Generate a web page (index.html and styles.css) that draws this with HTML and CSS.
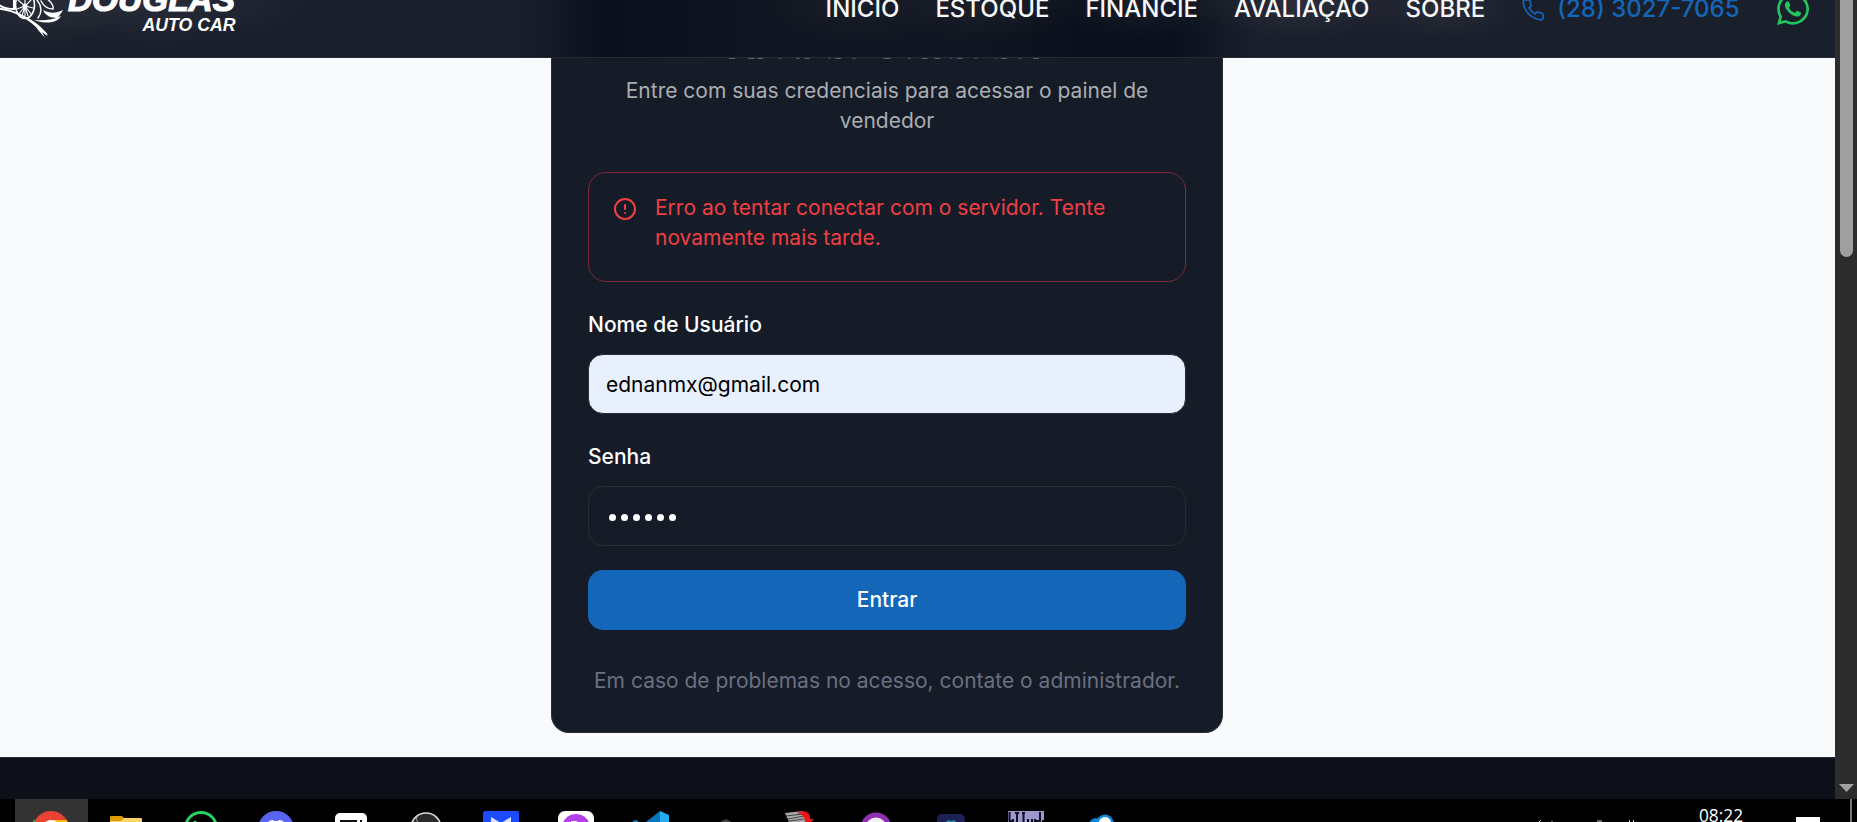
FILE: index.html
```html
<!DOCTYPE html>
<html lang="pt-BR">
<head>
<meta charset="utf-8">
<title>Douglas Auto Car</title>
<link rel="stylesheet" href="styles.css">
</head>
<body>
<div class="screen">
  <div class="viewport">
    <header class="site-header">
      <svg class="logo" width="240" height="57" viewBox="0 0 240 57">
        <g fill="none" stroke="#fff" stroke-linecap="round">
          <path d="M-2 8.500C16 10 30 19 42 31" stroke-width="2"/>
          <path d="M0 5.500C4 8 9 9 14 9V0" stroke-width="2"/>
          <ellipse cx="25" cy="5" rx="9.500" ry="13.500" stroke-width="1.600"/>
          <path d="M25 6V-6M25 6V16M25 6L19 14M25 6L31 14M25 6L17 9M25 6L33 8M25 6L18 0M25 6L32 -1M25 6L22 16M25 6L28 16" stroke-width="1.100"/>
          <path d="M37 0C42 6 42 13 38 18" stroke-width="1.400"/>
          <path d="M41 1C44 7 49 9 53 9C54 5 50 1 46 -2" stroke-width="1.400"/>
        </g>
        <g fill="#fff">
          <path d="M43 10C50 14 57 13 63 10C61 15 55 18 61 18C55 18 50 18 47 15C45 14 44 12 43 10Z"/>
          <path d="M34 20C44 21 53 20 61 16C58 22 48 25 34 20Z"/>
          <path d="M22 15C34 20 43 28 48 35L46 34.500L48.500 37L42 32L45 38L39 31C34 24 29 19 22 15Z"/>
          <circle cx="25" cy="6" r="2.500"/>
        </g>
        <text class="brand brand-name" x="68" y="11" textLength="167" lengthAdjust="spacingAndGlyphs">DOUGLAS</text>
        <text class="brand brand-sub" x="142.500" y="31" textLength="93" lengthAdjust="spacingAndGlyphs">AUTO CAR</text>
      </svg>
      <nav class="nav">
        <a>INÍCIO</a><a>ESTOQUE</a><a>FINANCIE</a><a>AVALIAÇÃO</a><a>SOBRE</a>
        <a class="phone">
          <svg width="24" height="24" viewBox="0 0 24 24" fill="none" stroke="currentColor" stroke-width="1.700" stroke-linecap="round" stroke-linejoin="round"><path d="M22 16.920v3a2 2 0 0 1-2.180 2 19.790 19.790 0 0 1-8.630-3.070 19.500 19.500 0 0 1-6-6 19.790 19.790 0 0 1-3.070-8.670A2 2 0 0 1 4.110 2h3a2 2 0 0 1 2 1.720 12.840 12.840 0 0 0 .7 2.810 2 2 0 0 1-.45 2.110L8.090 9.910a16 16 0 0 0 6 6l1.270-1.270a2 2 0 0 1 2.110-.45 12.840 12.840 0 0 0 2.810.7A2 2 0 0 1 22 16.920z"/></svg>
          <span>(28) 3027-7065</span>
        </a>
        <a class="whats">
          <svg width="32" height="32" viewBox="0 0 448 448" fill="currentColor"><path transform="translate(0 -32)" d="M380.900 97.100C339 55.100 283.200 32 223.900 32c-122.400 0-222 99.600-222 222 0 39.100 10.200 77.300 29.600 111L0 480l117.700-30.900c32.400 17.700 68.900 27 106.100 27h.1c122.300 0 224.100-99.600 224.100-222 0-59.300-25.200-115-67.100-157zm-157 341.600c-33.200 0-65.700-8.900-94-25.700l-6.700-4-69.800 18.300L72 359.200l-4.400-7c-18.500-29.400-28.200-63.300-28.200-98.200 0-101.700 82.800-184.500 184.600-184.500 49.300 0 95.600 19.200 130.400 54.100 34.800 34.900 56.200 81.200 56.100 130.500 0 101.800-84.900 184.600-186.600 184.600zm101.200-138.200c-5.500-2.800-32.800-16.200-37.900-18-5.100-1.900-8.800-2.800-12.500 2.800-3.700 5.600-14.300 18-17.600 21.800-3.200 3.700-6.500 4.200-12 1.400-32.600-16.300-54-29.100-75.500-66-5.700-9.800 5.700-9.100 16.300-30.300 1.800-3.700.9-6.900-.5-9.700-1.400-2.800-12.500-30.100-17.100-41.200-4.500-10.800-9.100-9.300-12.500-9.500-3.200-.2-6.900-.2-10.600-.2-3.700 0-9.700 1.400-14.800 6.900-5.100 5.600-19.400 19-19.400 46.300 0 27.300 19.900 53.700 22.600 57.400 2.800 3.700 39.100 59.700 94.800 83.800 35.200 15.200 49 16.500 66.600 13.900 10.700-1.600 32.800-13.400 37.400-26.400 4.600-13 4.600-24.100 3.200-26.400-1.300-2.500-5-3.900-10.500-6.600z"/></svg>
        </a>
      </nav>
    </header>

    <main class="main">
      <section class="card">
        <h1 class="title">Área do Vendedor</h1>
        <p class="subtitle">Entre com suas credenciais para acessar o painel de vendedor</p>
        <div class="alert">
          <svg width="24" height="24" viewBox="0 0 24 24" fill="none" stroke="currentColor" stroke-width="2" stroke-linecap="round"><circle cx="12" cy="12" r="10"/><path d="M12 8v4M12 16h.010"/></svg>
          <p>Erro ao tentar conectar com o servidor. Tente novamente mais tarde.</p>
        </div>
        <label class="label">Nome de Usuário</label>
        <div class="input filled">ednanmx@gmail.com</div>
        <label class="label">Senha</label>
        <div class="input password"><i></i><i></i><i></i><i></i><i></i><i></i></div>
        <button class="submit">Entrar</button>
        <p class="help">Em caso de problemas no acesso, contate o administrador.</p>
      </section>
    </main>
    <footer class="site-footer"></footer>
  </div>

  <div class="scrollbar">
    <div class="thumb"></div>
    <svg width="15" height="8" viewBox="0 0 15 8"><path d="M0 0H15L7.500 8Z" fill="#9f9f9f"/></svg>
  </div>

  <div class="taskbar">
    <svg width="1857" height="23" viewBox="0 0 1857 23">
      <rect x="15" width="73" height="23" fill="#333"/>
      <circle cx="51" cy="30" r="18" fill="#ea4335"/>
      <path d="M34 20L36 23H33Z" fill="#34a853"/>
      <path d="M51 21H67L69 30H51Z" fill="#fbbc04"/>
      <circle cx="51" cy="30" r="9" fill="#fff"/>

      <path d="M110 18a1 1 0 0 1 1-1H122L125 20V23H110Z" fill="#e09c00"/>
      <path d="M110 22L121 22L124 19H141a1 1 0 0 1 1 1V23H110Z" fill="#ffd566"/>

      <circle cx="201" cy="29" r="15.500" fill="none" stroke="#25d366" stroke-width="3"/>
      <path d="M193 23Q195 20 197 23Z" fill="#25d366"/>

      <circle cx="276" cy="30" r="18" fill="#5865f2"/>
      <path d="M268 23Q270 21 273 21L274 22H278L279 21Q282 21 284 23Z" fill="#fff"/>

      <rect x="335" y="14" width="32" height="20" rx="5" fill="#fff"/>
      <path d="M341 23V22H357M360 22H362" fill="none" stroke="#111" stroke-width="2"/>

      <circle cx="426" cy="29" r="15" fill="#29282b" stroke="#ddd" stroke-width="1.600"/>
      <path d="M418 17Q414 20 420 25" fill="none" stroke="#aaa" stroke-width="1"/>

      <rect x="483" y="12" width="36" height="20" rx="2" fill="#1d4cff"/>
      <path d="M491 18L501 24L511 18V23H491Z" fill="#dbe3ff"/>

      <rect x="558" y="12" width="36" height="20" rx="7" fill="#fff"/>
      <circle cx="576" cy="29" r="14" fill="#b43fe8"/>
      <path d="M571 22H576L578 23H571Z" fill="#fff"/>

      <path d="M633 22L636 21L639 23H633Z" fill="#1684c7"/>
      <path d="M646 23L660 12V23Z" fill="#0878bd"/>
      <path d="M660 12L669 16V23H660Z" fill="#28aaf0"/>

      <path d="M720 23L726 20L732 23Z" fill="#47423f"/>

      <path d="M785 14L803 12L806 23H789Z" fill="#aaa"/>
      <path d="M786 17L803 15M788 20L804 17M789 22L804 20" stroke="#444" stroke-width="1"/>
      <path d="M797 14C803 10 811 13 810 20L814 20L811 23H805C805 19 803 15 797 14Z" fill="#ee151b"/>

      <circle cx="876" cy="29" r="13" fill="#f1eef8" stroke="#9030b0" stroke-width="5"/>

      <rect x="937" y="15" width="28" height="20" rx="5" fill="#1c2354"/>
      <path d="M946 23Q948 20 951 22Q955 20 956 23" fill="#278cab"/>

      <rect x="1008" y="12" width="36" height="11" fill="#9d97cf"/>
      <path d="M1009.500 13V23M1013 20V23M1017 14V23M1015 14H1019M1023.500 14V23M1022 14H1025M1028 20V23M1032 20V23M1035 20V23M1040 13V23M1043 21V23M1009 22H1013M1036 22H1041" fill="none" stroke="#11101b" stroke-width="2"/>

      <circle cx="1096" cy="26" r="7" fill="#0c83d2"/>
      <circle cx="1105" cy="24" r="7.300" fill="#fff" stroke="#0c8de0" stroke-width="2.500"/>

      <path d="M1541 21L1539 23M1552 22V23M1597 22H1602M1629.500 21V23M1633.500 21V23" stroke="#ccc" stroke-width="1"/>
      <text class="clock" x="1699" y="22.500" textLength="44" lengthAdjust="spacingAndGlyphs">08:22</text>
      <rect x="1796" y="18" width="24" height="5" fill="#fff"/>
      <rect x="1850" width="2" height="23" fill="#777"/>
    </svg>
  </div>
</div>
</body>
</html>
```
FILE: styles.css
```css
* { box-sizing: border-box; margin: 0; padding: 0; }
html, body { width: 1857px; height: 822px; overflow: hidden; background: #000; }
body { font-family: Inter, "Liberation Sans", sans-serif; font-size: 21px; line-height: 30px; }
.screen { display: grid; grid-template-columns: 1835px 22px; grid-template-rows: 799px 23px; }
.viewport { position: relative; display: flex; flex-direction: column; background: #f9fafc; overflow: hidden; }

.site-header {
  position: absolute; top: 0; left: 0; z-index: 2;
  width: 100%; height: 58px; overflow: hidden;
  display: flex; justify-content: space-between; align-items: flex-start;
  padding-right: 26px;
  border-bottom: 1px solid #252a35;
  background:
    radial-gradient(ellipse 90px 50px at 30px 0, rgba(50, 55, 65, .55), transparent),
    radial-gradient(ellipse 150px 45px at 160px 0, rgba(50, 55, 65, .55), transparent),
    radial-gradient(ellipse 110px 36px at 1300px 4px, rgba(52, 54, 62, .6), transparent),
    radial-gradient(ellipse 80px 34px at 1444px 8px, rgba(52, 54, 62, .5), transparent),
    radial-gradient(ellipse 90px 34px at 860px 4px, rgba(38, 42, 52, .4), transparent),
    radial-gradient(ellipse 90px 34px at 992px 4px, rgba(38, 42, 52, .5), transparent),
    radial-gradient(ellipse 90px 34px at 1142px 4px, rgba(38, 42, 52, .5), transparent),
    linear-gradient(90deg, #1a1f2c 0, #1a1f2c 510px, #131925 555px, #0a101c 600px, #0b111d 660px, #111622 780px, #111622 960px, #0a101c 1080px, #0a101c 1175px, #131925 1220px, #1a1f2c 1260px, #1a1f2c 100%);
}
.logo { display: block; flex: none; }
.brand { fill: #fff; font-family: "Liberation Sans", Arial, sans-serif; font-weight: 700; font-style: italic; }
.brand-name { font-size: 34px; stroke: #fff; stroke-width: 1.200px; }
.brand-sub { font-size: 18.500px; }
.nav { display: flex; align-items: center; gap: 36px; height: 36px; margin-top: -9px; color: #f7f8fa; font-size: 24px; font-weight: 500; line-height: 36px; white-space: nowrap; }
.nav a { display: flex; align-items: center; }
.nav .phone { gap: 12px; color: #1466b8; }
.phone svg { margin-top: 2px; }
.nav .whats { margin-left: 1.500px; color: #22c55e; }

.main { flex: none; height: 757px; display: flex; justify-content: center; align-items: flex-start; padding-right: 61px; }
.card { width: 672px; height: 733px; padding: 21px 36px 0; background: #161b28; border: 1px solid #282d38; border-top: 0; border-radius: 0 0 18px 18px; display: flex; flex-direction: column; }
.title { height: 48px; color: #fff; font-size: 36px; line-height: 48px; font-weight: 700; text-align: center; -webkit-text-stroke: .3px #fff; }
.subtitle { margin-top: 7px; color: #abadb1; text-align: center; }
.alert { display: flex; gap: 18px; height: 110px; margin-top: 36px; padding: 20px 24px; color: #ef3f43; border: 1px solid #7d2b36; border-radius: 18px; }
.alert svg { flex: none; margin-top: 4px; }
.label { margin-top: 28px; color: #fff; font-weight: 500; }
.input { display: flex; align-items: center; height: 60px; margin-top: 14px; padding: 2px 17px 0; border: 1px solid #292d35; border-radius: 15px; color: #fff; }
.filled { background: #e8effd; color: #000; }
.password { gap: 5px; padding-left: 20px; padding-top: 3px; }
.password i { width: 7px; height: 7px; border-radius: 50%; background: #fff; }
.submit { height: 60px; margin-top: 24px; border: 0; border-radius: 15px; background: #1466b8; color: #fff; font: 500 21px/30px Inter, sans-serif; }
.help { margin-top: 36px; color: #6a7080; text-align: center; white-space: nowrap; }
.site-footer { flex: 1; background: #0d1018; border-top: 1px solid #272b33; }

.scrollbar { display: flex; flex-direction: column; justify-content: space-between; align-items: center; background: #2c2c2c; padding-bottom: 7px; }
.thumb { width: 13px; height: 257px; background: #9f9f9f; border-radius: 0 0 7px 7px; }
.taskbar { grid-column: 1 / -1; background: #000; }
.taskbar svg { display: block; }
.clock { fill: #fff; font-family: "Open Sans", "Noto Sans", sans-serif; font-size: 17.500px; }
```
